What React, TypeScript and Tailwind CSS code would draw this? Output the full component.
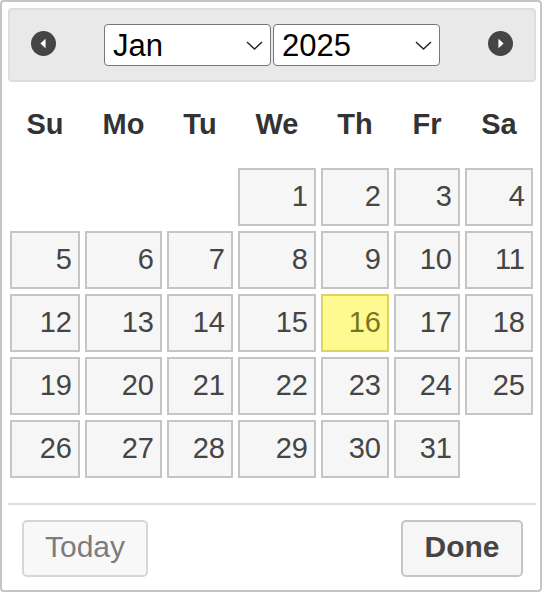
import React from 'react'

const days = ['Su', 'Mo', 'Tu', 'We', 'Th', 'Fr', 'Sa']

// January 2025 starts on a Wednesday
const cells: (number | null)[] = [
  ...Array(3).fill(null),
  ...Array.from({ length: 31 }, (_, i) => i + 1),
  null,
]

const Chevron = () => (
  <svg width="17" height="9" viewBox="0 0 17 9" fill="none" className="shrink-0">
    <path d="M1 1l7.5 7 7.5-7" stroke="#222" strokeWidth="1.4" />
  </svg>
)

const Arrow = ({ dir }: { dir: 'prev' | 'next' }) => (
  <svg width="25" height="25" viewBox="0 0 24 24" className="shrink-0">
    <circle cx="12" cy="12" r="12" fill="#454545" />
    {dir === 'prev' ? (
      <path d="M14 7.5v9L9 12z" fill="#fff" />
    ) : (
      <path d="M10 7.5v9l5-4.5z" fill="#fff" />
    )}
  </svg>
)

const Select = ({ value }: { value: string }) => (
  <div className="w-[167px] h-[42px] bg-white border-[1.5px] border-[#767676] rounded-[4px] flex items-center justify-between pl-[8px] pr-[7px] text-[31px] text-black">
    <span className="leading-none">{value}</span>
    <Chevron />
  </div>
)

export default function App() {
  return (
    <div
      className="w-[542px] h-[592px] bg-white border-2 border-[#c5c5c5] rounded-[4px] pl-[6px] pr-[4px] pt-[6px] text-[#454545]"
      style={{ fontFamily: '"Liberation Sans", Arial, sans-serif' }}
    >
      {/* header */}
      <div className="h-[74px] bg-[#e9e9e9] border-2 border-[#dddddd] rounded-[4px] flex items-center pl-[21px]">
        <div className="mb-[4px]">
          <Arrow dir="prev" />
        </div>
        <div className="ml-[48px] flex gap-[2px]">
          <Select value="Jan" />
          <Select value="2025" />
        </div>
        <div className="ml-[48px] mb-[4px]">
          <Arrow dir="next" />
        </div>
      </div>

      {/* calendar */}
      <div className="mt-[5px] ml-[2px] grid grid-cols-[70px_77px_66px_78px_68px_66px_68px] grid-rows-[76px_repeat(5,58px)] gap-[5px]">
        {days.map((d) => (
          <div key={d} className="flex items-center justify-center text-[29px] font-bold text-[#333]">
            {d}
          </div>
        ))}
        {cells.map((n, i) =>
          n === null ? (
            <div key={i} />
          ) : n === 16 ? (
            <div
              key={i}
              className="flex items-center justify-end pr-[6px] border-2 border-[#dad55e] bg-[#fffa90] text-[#777620] text-[29px]"
            >
              {n}
            </div>
          ) : (
            <div
              key={i}
              className="flex items-center justify-end pr-[6px] border-2 border-[#c5c5c5] bg-[#f6f6f6] text-[29px]"
            >
              {n}
            </div>
          )
        )}
      </div>

      {/* button pane */}
      <div className="mt-[25px] h-[2px] bg-[#dddddd]" />
      <div className="mt-[15px] flex justify-between pl-[14px] pr-[13px]">
        <button className="w-[126px] h-[57px] bg-[#f6f6f6] border-2 border-[#c5c5c5] rounded-[5px] text-[30px] leading-none pb-[3px] text-[#454545] opacity-70">
          Today
        </button>
        <button className="w-[122px] h-[57px] bg-[#f6f6f6] border-2 border-[#c5c5c5] rounded-[5px] text-[30px] leading-none pb-[3px] font-bold text-[#454545]">
          Done
        </button>
      </div>
    </div>
  )
}
